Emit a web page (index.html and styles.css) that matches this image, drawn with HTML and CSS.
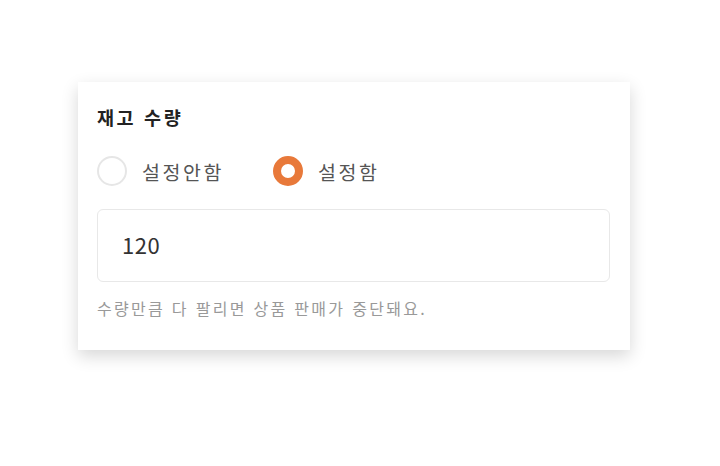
FILE: index.html
```html
<!DOCTYPE html>
<html lang="ko">
<head>
<meta charset="utf-8">
<link rel="stylesheet" href="styles.css">
</head>
<body>
<div class="page">
  <div class="card">
    <div class="title">재고 수량</div>
    <div class="radios">
      <label class="radio"><span class="dot"></span><span class="label">설정안함</span></label>
      <label class="radio on"><span class="dot"></span><span class="label">설정함</span></label>
    </div>
    <div class="input">120</div>
    <div class="help">수량만큼 다 팔리면 상품 판매가 중단돼요.</div>
  </div>
</div>
</body>
</html>
```
FILE: styles.css
```css
html, body { margin: 0; padding: 0; background: #fff; }
body { font-family: "Noto Sans CJK KR", "Noto Sans", sans-serif; width: 720px; height: 466px; overflow: hidden; }
.page { padding: 82px 0 0 78px; }
.card {
  width: 552px;
  height: 268px;
  box-sizing: border-box;
  padding: 21px 20px 0 19px;
  background: #fff;
  box-shadow: 0 6px 16px rgba(0,0,0,0.16);
}
.title { font-size: 18.5px; font-weight: 700; color: #222; line-height: 28px; letter-spacing: 2.6px; }
.radios { display: flex; margin-top: 24px; height: 32px; align-items: center; }
.radio { display: flex; align-items: center; width: 176px; }
.dot { flex: none; width: 30px; height: 30px; box-sizing: border-box; border-radius: 50%; border: 2px solid #e6e6e6; background: #fff; }
.radio.on .dot { border: 8px solid #e8793a; }
.label { margin-left: 15px; font-size: 19.5px; color: #555; letter-spacing: 2.6px; }
.input {
  margin-top: 22px;
  height: 73px;
  box-sizing: border-box;
  border: 1px solid #e8e8e8;
  border-radius: 6px;
  padding: 0 24px 4px;
  display: flex; align-items: center;
  font-size: 22px; color: #333; letter-spacing: 0.5px;
}
.help { margin-top: 14px; font-size: 16px; color: #999; line-height: 24px; letter-spacing: 2.3px; }
```
